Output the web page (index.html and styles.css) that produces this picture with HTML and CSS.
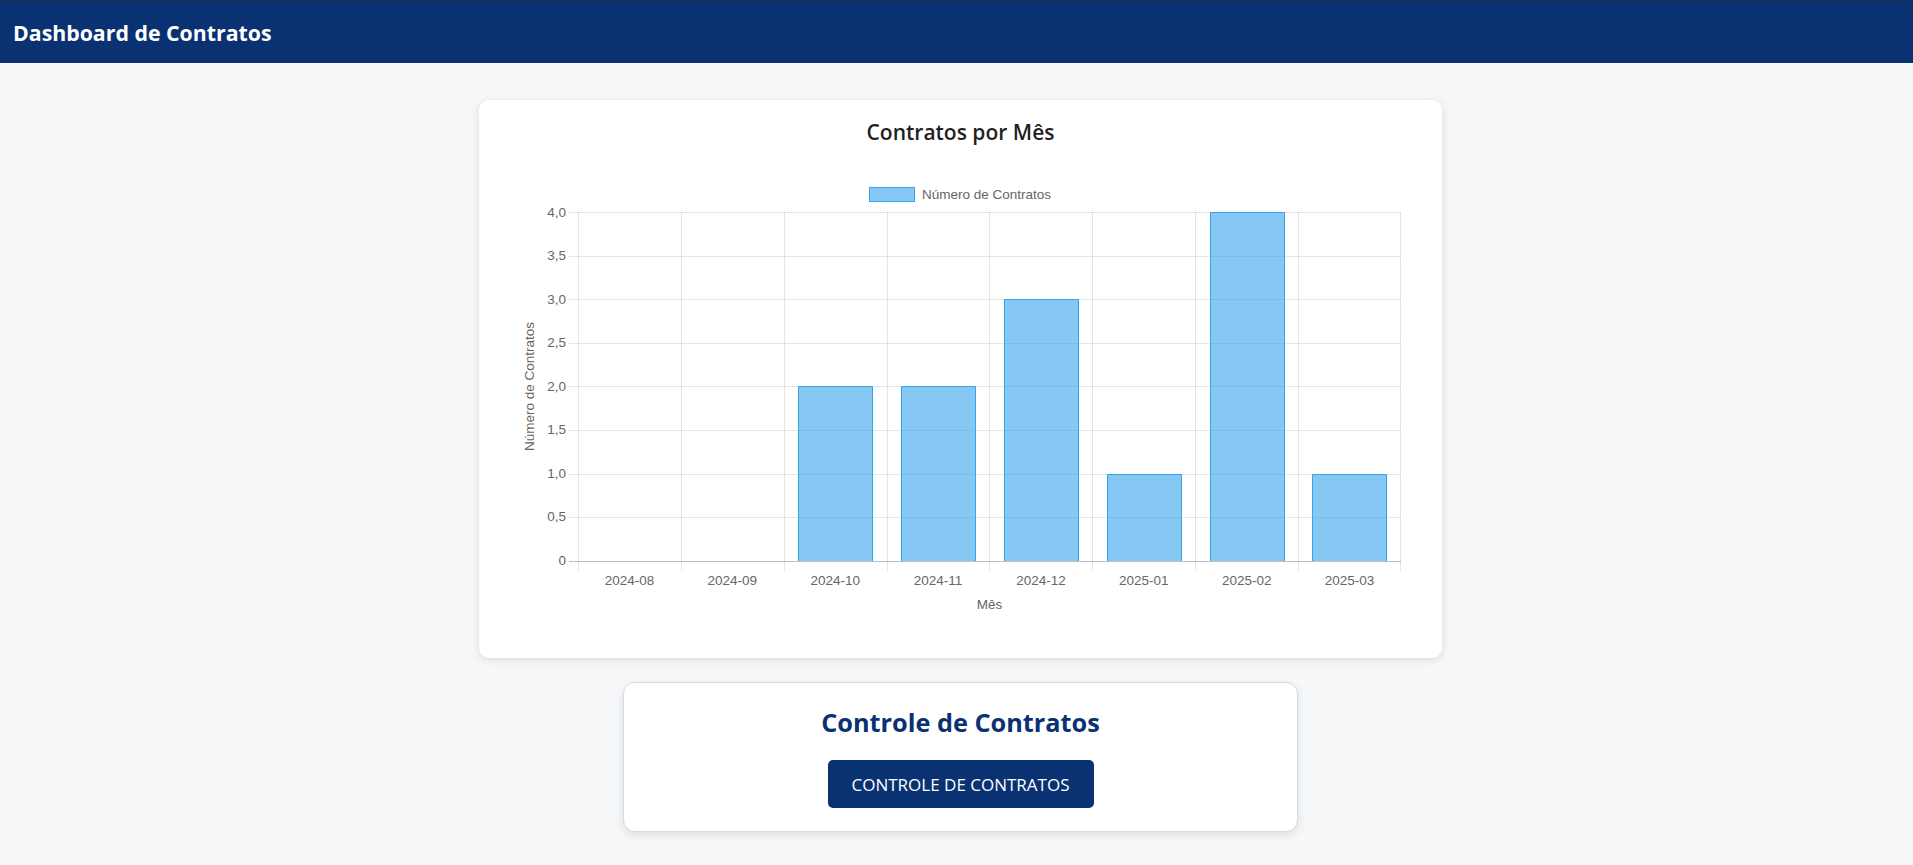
FILE: index.html
```html
<!DOCTYPE html>
<html lang="pt-BR">
<head>
<meta charset="utf-8">
<title>Dashboard de Contratos</title>
<link rel="stylesheet" href="styles.css">
</head>
<body>
<header class="topbar">
  <h1 class="topbar-title">Dashboard de Contratos</h1>
</header>
<main class="page">
  <section class="card chart-card">
    <h2 class="chart-title">Contratos por Mês</h2>
    <svg class="chart" width="923" height="488" viewBox="0 0 923 488" xmlns="http://www.w3.org/2000/svg">
      <!-- legend -->
      <rect x="370.5" y="37.5" width="45" height="14" fill="rgba(54,162,235,0.6)" stroke="rgb(54,162,235)" stroke-width="1"/>
      <text class="tick" x="423" y="45" dominant-baseline="middle">Número de Contratos</text>

      <!-- horizontal grid -->
      <g stroke="rgba(0,0,0,0.1)" stroke-width="1">
        <line x1="70" y1="62.5" x2="902" y2="62.5"/>
        <line x1="70" y1="106.5" x2="902" y2="106.5"/>
        <line x1="70" y1="149.5" x2="902" y2="149.5"/>
        <line x1="70" y1="193.5" x2="902" y2="193.5"/>
        <line x1="70" y1="236.5" x2="902" y2="236.5"/>
        <line x1="70" y1="280.5" x2="902" y2="280.5"/>
        <line x1="70" y1="324.5" x2="902" y2="324.5"/>
        <line x1="70" y1="367.5" x2="902" y2="367.5"/>
      </g>
      <!-- vertical grid -->
      <g stroke="rgba(0,0,0,0.1)" stroke-width="1">
        <line x1="79.5" y1="62" x2="79.5" y2="421"/>
        <line x1="182.5" y1="62" x2="182.5" y2="421"/>
        <line x1="285.5" y1="62" x2="285.5" y2="421"/>
        <line x1="388.5" y1="62" x2="388.5" y2="421"/>
        <line x1="490.5" y1="62" x2="490.5" y2="421"/>
        <line x1="593.5" y1="62" x2="593.5" y2="421"/>
        <line x1="696.5" y1="62" x2="696.5" y2="421"/>
        <line x1="799.5" y1="62" x2="799.5" y2="421"/>
        <line x1="901.5" y1="62" x2="901.5" y2="421"/>
      </g>

      <!-- bars -->
      <g fill="rgba(54,162,235,0.6)" stroke="rgb(54,162,235)" stroke-width="1">
        <path d="M299.5 411 V236.5 H373.5 V411 Z" stroke="none"/>
        <path d="M299.5 411 V236.5 H373.5 V411" fill="none"/>
        <path d="M402.5 411 V236.5 H476.5 V411 Z" stroke="none"/>
        <path d="M402.5 411 V236.5 H476.5 V411" fill="none"/>
        <path d="M505.5 411 V149.5 H579.5 V411 Z" stroke="none"/>
        <path d="M505.5 411 V149.5 H579.5 V411" fill="none"/>
        <path d="M608.5 411 V324.5 H682.5 V411 Z" stroke="none"/>
        <path d="M608.5 411 V324.5 H682.5 V411" fill="none"/>
        <path d="M711.5 411 V62.5 H785.5 V411 Z" stroke="none"/>
        <path d="M711.5 411 V62.5 H785.5 V411" fill="none"/>
        <path d="M813.5 411 V324.5 H887.5 V411 Z" stroke="none"/>
        <path d="M813.5 411 V324.5 H887.5 V411" fill="none"/>
      </g>

      <!-- zero line -->
      <line x1="70" y1="411.5" x2="902" y2="411.5" stroke="rgba(0,0,0,0.25)" stroke-width="1"/>

      <!-- y ticks -->
      <g class="tick" text-anchor="end" dominant-baseline="middle">
        <text x="67" y="63">4,0</text>
        <text x="67" y="106">3,5</text>
        <text x="67" y="150">3,0</text>
        <text x="67" y="193">2,5</text>
        <text x="67" y="237">2,0</text>
        <text x="67" y="280">1,5</text>
        <text x="67" y="324">1,0</text>
        <text x="67" y="367">0,5</text>
        <text x="67" y="411">0</text>
      </g>

      <!-- x ticks -->
      <g class="tick" text-anchor="middle" dominant-baseline="middle">
        <text x="130.4" y="431">2024-08</text>
        <text x="233.3" y="431">2024-09</text>
        <text x="336.2" y="431">2024-10</text>
        <text x="439.1" y="431">2024-11</text>
        <text x="541.9" y="431">2024-12</text>
        <text x="644.8" y="431">2025-01</text>
        <text x="747.7" y="431">2025-02</text>
        <text x="850.6" y="431">2025-03</text>
      </g>

      <!-- axis titles -->
      <text class="tick" x="490.5" y="455" text-anchor="middle" dominant-baseline="middle">Mês</text>
      <text class="tick" x="0" y="0" text-anchor="middle" dominant-baseline="middle" transform="translate(31 236.5) rotate(-90)">Número de Contratos</text>
    </svg>
  </section>

  <section class="card control-card">
    <h2 class="control-title">Controle de Contratos</h2>
    <button class="control-btn" type="button">CONTROLE DE CONTRATOS</button>
  </section>
</main>
</body>
</html>
```

FILE: styles.css
```css
* {
  box-sizing: border-box;
}

html, body {
  margin: 0;
  padding: 0;
}

body {
  background: #f6f7f9;
  font-family: "Open Sans", "Noto Sans", Arial, sans-serif;
  color: #222;
  min-height: 865px;
}

.topbar {
  height: 63px;
  background: #0a3172;
  border-top: 1px solid #1c2b4a;
  display: flex;
  align-items: center;
  padding-left: 13px;
}

.topbar-title {
  margin: 0;
  color: #ffffff;
  font-size: 21.3px;
  font-weight: 700;
  line-height: 28px;
  padding-top: 1px;
}

.page {
  display: flex;
  flex-direction: column;
  align-items: center;
  gap: 24px;
  padding: 37px 0 30px 8px;
}

.card {
  background: #ffffff;
}

.chart-card {
  width: 963px;
  padding: 20px;
  border-radius: 10px;
  box-shadow: 0 2px 8px rgba(0, 0, 0, 0.12);
}

.chart-title {
  margin: 0 0 6px;
  text-align: center;
  font-size: 21px;
  font-weight: 600;
  line-height: 24px;
  color: #1f1f1f;
}

.chart {
  display: block;
}

.tick {
  font-family: "Liberation Sans", Arial, sans-serif;
  font-size: 13.5px;
  fill: #666666;
}

.control-card {
  width: 675px;
  padding: 24px 20px 23px;
  border: 1px solid #d6dbe1;
  border-radius: 12px;
  box-shadow: 0 3px 8px rgba(0, 0, 0, 0.1);
  display: flex;
  flex-direction: column;
  align-items: center;
}

.control-title {
  margin: 0 0 22px;
  font-size: 25.3px;
  font-weight: 700;
  line-height: 31px;
  color: #0a3172;
}

.control-btn {
  width: 266px;
  height: 48px;
  border: none;
  border-radius: 5px;
  background: #0a3172;
  color: #ffffff;
  font-family: "Open Sans", "Noto Sans", Arial, sans-serif;
  font-size: 17px;
  font-weight: 400;
  cursor: pointer;
}
```
